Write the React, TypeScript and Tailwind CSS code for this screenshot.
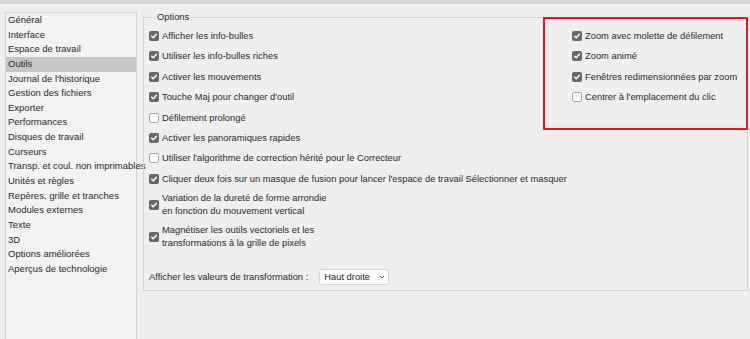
const sidebarItems = [
  'Général',
  'Interface',
  'Espace de travail',
  'Outils',
  "Journal de l'historique",
  'Gestion des fichiers',
  'Exporter',
  'Performances',
  'Disques de travail',
  'Curseurs',
  'Transp. et coul. non imprimables',
  'Unités et règles',
  'Repères, grille et tranches',
  'Modules externes',
  'Texte',
  '3D',
  'Options améliorées',
  'Aperçus de technologie',
];

const leftOptions: { label: string; checked: boolean }[] = [
  { label: 'Afficher les info-bulles', checked: true },
  { label: 'Utiliser les info-bulles riches', checked: true },
  { label: 'Activer les mouvements', checked: true },
  { label: "Touche Maj pour changer d'outil", checked: true },
  { label: 'Défilement prolongé', checked: false },
  { label: 'Activer les panoramiques rapides', checked: true },
  { label: "Utiliser l'algorithme de correction hérité pour le Correcteur", checked: false },
  { label: "Cliquer deux fois sur un masque de fusion pour lancer l'espace de travail Sélectionner et masquer", checked: true },
];

const zoomOptions: { label: string; checked: boolean }[] = [
  { label: 'Zoom avec molette de défilement', checked: true },
  { label: 'Zoom animé', checked: true },
  { label: 'Fenêtres redimensionnées par zoom', checked: true },
  { label: "Centrer à l'emplacement du clic", checked: false },
];

function Checkbox({ checked }: { checked: boolean }) {
  if (!checked) {
    return <span className="w-[10px] h-[10px] shrink-0 rounded-[2px] bg-white border border-[#a8a8a8]" />;
  }
  return (
    <span className="w-[10px] h-[10px] shrink-0 rounded-[2px] bg-[#686868] flex items-center justify-center">
      <svg width="8" height="8" viewBox="0 0 8 8">
        <path d="M1.6 4.2 L3.3 5.8 L6.4 2.2" fill="none" stroke="white" strokeWidth="1.4" strokeLinecap="round" strokeLinejoin="round" />
      </svg>
    </span>
  );
}

function Option({ label, checked }: { label: string; checked: boolean }) {
  return (
    <div className="h-[20.4px] flex items-center gap-[3px] whitespace-nowrap">
      <Checkbox checked={checked} />
      <span>{label}</span>
    </div>
  );
}

function TwoLineOption({ lines, checked, className }: { lines: string[]; checked: boolean; className: string }) {
  return (
    <div className={`flex items-center gap-[3px] leading-[13px] ${className}`}>
      <Checkbox checked={checked} />
      <div>
        {lines.map(l => (
          <div key={l} className="whitespace-nowrap">{l}</div>
        ))}
      </div>
    </div>
  );
}

export default function App() {
  return (
    <div className="w-[750px] h-[339px] overflow-hidden bg-[#efefef] flex flex-col text-[9.35px] text-[#2a2a2a] font-['Liberation_Sans',Arial,sans-serif]">
      {/* window top strip */}
      <div className="h-[4px] shrink-0 bg-[#d6d6d6]" />

      <div className="flex flex-1 min-h-0">
        {/* Categories */}
        <div className="ml-[5px] mt-[8px] w-[132px] shrink-0 -mb-[2px] border border-[#d2d2d2] bg-[#f3f3f3] text-[9.5px]">
          {sidebarItems.map(item => (
            <div
              key={item}
              className={`h-[14.65px] leading-[14.65px] pl-[2px] whitespace-nowrap ${item === 'Outils' ? 'bg-[#c6c6c6]' : ''}`}
            >
              {item}
            </div>
          ))}
        </div>

        {/* Options group */}
        <div className="relative ml-[6px] mt-[13px] w-[605px] h-[274px] shrink-0 border border-[#d3d3d3] flex">
          <span className="absolute -top-[7px] left-[9px] px-[4px] bg-[#efefef] leading-[13px]">Options</span>

          <div className="w-[398px] min-w-0 shrink-0 flex flex-col pl-[5px] pt-[7.8px]">
            {leftOptions.map(o => (
              <Option key={o.label} label={o.label} checked={o.checked} />
            ))}
            <TwoLineOption
              className="mt-[3.3px]"
              checked
              lines={['Variation de la dureté de forme arrondie', 'en fonction du mouvement vertical']}
            />
            <TwoLineOption
              className="mt-[6px]"
              checked
              lines={['Magnétiser les outils vectoriels et les', 'transformations à la grille de pixels']}
            />

            <div className="mt-auto mb-[5px] flex items-center gap-[11px] whitespace-nowrap">
              <span>Afficher les valeurs de transformation :</span>
              <div className="w-[70px] h-[16px] shrink-0 bg-white border border-[#d5d5d5] rounded-[3px] flex items-center justify-between pl-[4px] pr-[3px]">
                <span className="text-[#1e1e1e] font-medium">Haut droite</span>
                <svg width="6" height="6" viewBox="0 0 6 6">
                  <path d="M1 2 L3 4 L5 2" fill="none" stroke="#555" strokeWidth="1" />
                </svg>
              </div>
            </div>
          </div>

          <div className="flex-1" />

          {/* Zoom options, highlighted */}
          <div className="w-[205px] h-[113px] -mt-[1px] -mr-[1px] shrink-0 border-2 border-[#e31a1f] pl-[27px] pt-[6.8px]">
            {zoomOptions.map(o => (
              <Option key={o.label} label={o.label} checked={o.checked} />
            ))}
          </div>
        </div>
      </div>
    </div>
  );
}
